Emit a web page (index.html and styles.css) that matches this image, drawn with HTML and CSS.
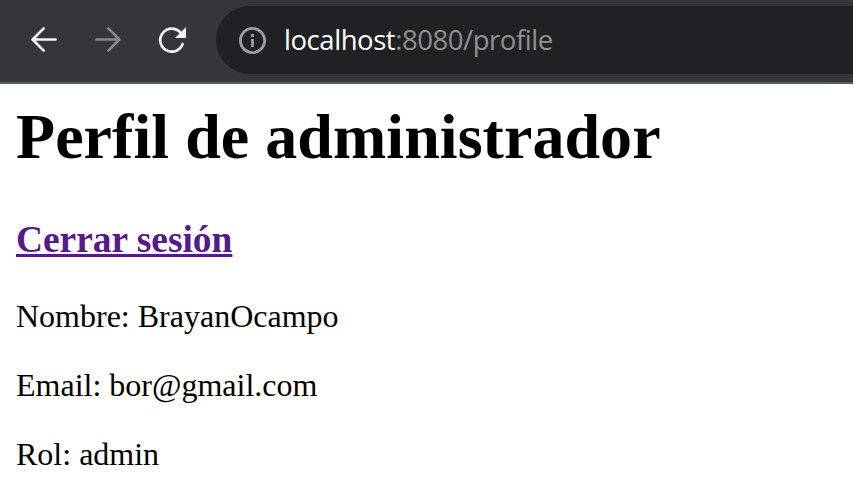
FILE: index.html
```html
<!DOCTYPE html>
<html lang="es">
<head>
<meta charset="utf-8">
<title>Perfil</title>
<link rel="stylesheet" href="styles.css">
</head>
<body>
<header class="toolbar">
  <nav class="nav">
    <svg class="icon" viewBox="0 0 32 32"><path d="M27.500 15.500H5M15.700 4.400L4.600 15.500l11.100 11.100"/></svg>
    <svg class="icon dim" viewBox="0 0 32 32"><path d="M4.500 15.500H27M16.300 4.400l11.100 11.100-11.100 11.100"/></svg>
    <svg class="icon" viewBox="0 0 32 32"><path d="M24.500 8.700A11.500 11.500 0 1 0 26.600 20"/><path class="head" d="M30 3v11H19z"/></svg>
  </nav>
  <div class="address">
    <svg class="info" viewBox="0 0 28 28"><circle cx="14.500" cy="14.500" r="12.100"/><path d="M14.500 13v8M14.500 8v3"/></svg>
    <span class="url"><span class="host">localhost</span>:8080/profile</span>
  </div>
</header>
<main class="page">
  <h1>Perfil de administrador</h1>
  <h3><a href="#">Cerrar sesión</a></h3>
  <p>Nombre: BrayanOcampo</p>
  <p>Email: bor@gmail.com</p>
  <p>Rol: admin</p>
</main>
</body>
</html>
```
FILE: styles.css
```css
body { margin: 0; height: 492px; overflow: hidden; background: #fff; color: #000; font: 32px/37px "Liberation Serif", serif; }
.toolbar { box-sizing: border-box; height: 84px; margin-right: 1px; display: flex; align-items: flex-start; background: #35363a; border-bottom: 2px solid #5d5e61; padding-top: 6px; }
.nav { display: flex; align-items: center; gap: 32px; height: 68px; width: 188px; padding-left: 28px; }
.icon { width: 32px; height: 32px; fill: none; stroke: #f1f3f4; stroke-width: 2.700; stroke-linecap: round; stroke-linejoin: round; }
.dim { stroke: #87888a; }
.head { fill: #f1f3f4; stroke: none; }
.address { flex: 1; height: 68px; box-sizing: border-box; display: flex; align-items: center; background: #202124; border-radius: 34px 0 0 34px; padding-left: 22px; }
.info { width: 28px; height: 28px; fill: none; stroke: #9aa0a6; stroke-width: 2.800; }
.url { margin-left: 18px; color: #909193; font: 27.500px/34px "Open Sans", sans-serif; letter-spacing: -0.450px; white-space: nowrap; }
.host { color: #fff; }
.page { padding: 16px; }
h1 { margin: 0; font-size: 64px; line-height: 74px; letter-spacing: 0.050px; }
h3 { margin: 44px 0 0; font-size: 37.400px; line-height: 43px; }
a { color: #551a8b; text-decoration-thickness: 3px; }
p { margin: 32px 0 0; }
h3 + p { margin-top: 37px; }
```
